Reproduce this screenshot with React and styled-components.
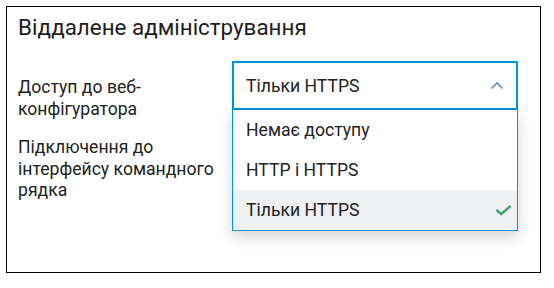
import React from 'react';
import styled, { createGlobalStyle } from 'styled-components';

const GlobalStyle = createGlobalStyle`
  body {
    margin: 0;
    background: #fff;
    font-family: Roboto, "Noto Sans", sans-serif;
    color: #222;
  }
`;

const Page = styled.div`
  padding: 6px;
`;

const Panel = styled.section`
  box-sizing: border-box;
  width: 535px;
  height: 267px;
  border: 1px solid #000;
  padding: 7px 11px;
`;

const Title = styled.h2`
  margin: 0;
  font-size: 22.4px;
  line-height: 26px;
  font-weight: 400;
  color: #1d1d1d;
`;

const Form = styled.div`
  margin-top: 21px;
  display: flex;
  flex-direction: column;
  gap: 1px;
`;

const Row = styled.div`
  display: grid;
  grid-template-columns: 214px 286px;
  align-items: start;
`;

const Label = styled.div`
  padding-top: 16px;
  font-size: 17.6px;
  line-height: 21.5px;
  color: #222;
`;

const SelectWrap = styled.div`
  position: relative;
`;

const Select = styled.div`
  box-sizing: border-box;
  height: 49px;
  display: flex;
  align-items: center;
  justify-content: space-between;
  padding: 0 12px 0 12px;
  border: 2px solid ${(p) => (p.$open ? '#0095d8' : '#c8ccd0')};
  font-size: 17.6px;
  color: #222;
  background: #fff;
`;

const Menu = styled.ul`
  position: absolute;
  top: 100%;
  left: 0;
  right: 0;
  margin: 0;
  padding: 0;
  list-style: none;
  background: #fff;
  border: 1px solid #0095d8;
  border-top: none;
  box-shadow: 0 6px 14px rgba(0, 0, 0, 0.18);
  z-index: 2;
`;

const Item = styled.li`
  height: 40px;
  display: flex;
  align-items: center;
  justify-content: space-between;
  padding: 0 5px 0 13px;
  font-size: 17.6px;
  color: #222;
  background: ${(p) => (p.$selected ? '#eef0f2' : '#fff')};
`;

const Chevron = () => (
  <svg width="14" height="9" viewBox="0 0 14 9" fill="none">
    <path d="M1.5 7.5 L7 2 L12.5 7.5" stroke="#5b8fcb" strokeWidth="1.6" />
  </svg>
);

const Check = () => (
  <svg width="17" height="12" viewBox="0 0 17 12" fill="none">
    <path d="M1.5 5.8 L6.2 10.2 L15.5 2" stroke="#38a46a" strokeWidth="2.4" />
  </svg>
);

const options = ['Немає доступу', 'HTTP і HTTPS', 'Тільки HTTPS'];

const App = () => {
  const value = 'Тільки HTTPS';
  return (
    <Page>
      <GlobalStyle />
      <Panel>
        <Title>Віддалене адміністрування</Title>
        <Form>
          <Row>
            <Label>Доступ до веб-конфігуратора</Label>
            <SelectWrap>
              <Select $open>
                {value}
                <Chevron />
              </Select>
              <Menu>
                {options.map((o) => (
                  <Item key={o} $selected={o === value}>
                    {o}
                    {o === value && <Check />}
                  </Item>
                ))}
              </Menu>
            </SelectWrap>
          </Row>
          <Row>
            <Label>Підключення до інтерфейсу командного рядка</Label>
            <SelectWrap>
              <Select />
            </SelectWrap>
          </Row>
        </Form>
      </Panel>
    </Page>
  );
};

export default App;
